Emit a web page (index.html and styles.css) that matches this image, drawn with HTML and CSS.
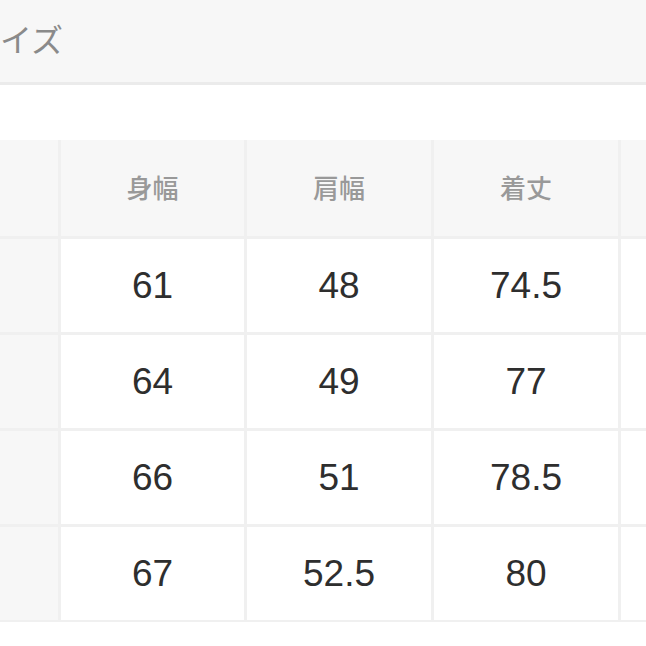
FILE: index.html
```html
<!DOCTYPE html>
<html lang="ja">
<head>
<meta charset="utf-8">
<link rel="stylesheet" href="styles.css">
</head>
<body>
<div class="page">
  <div class="titlebar"><span class="title">イズ</span></div>
  <div class="spacer"></div>
  <div class="table">
    <div class="cell rowhead"></div>
    <div class="cell head">身幅</div>
    <div class="cell head">肩幅</div>
    <div class="cell head">着丈</div>
    <div class="cell head"></div>

    <div class="cell rowhead"></div>
    <div class="cell data">61</div>
    <div class="cell data">48</div>
    <div class="cell data">74.5</div>
    <div class="cell data"></div>

    <div class="cell rowhead"></div>
    <div class="cell data">64</div>
    <div class="cell data">49</div>
    <div class="cell data">77</div>
    <div class="cell data"></div>

    <div class="cell rowhead"></div>
    <div class="cell data">66</div>
    <div class="cell data">51</div>
    <div class="cell data">78.5</div>
    <div class="cell data"></div>

    <div class="cell rowhead"></div>
    <div class="cell data">67</div>
    <div class="cell data">52.5</div>
    <div class="cell data">80</div>
    <div class="cell data"></div>
  </div>
</div>
</body>
</html>
```

FILE: styles.css
```css
html, body {
  margin: 0;
  padding: 0;
  background: #ffffff;
  overflow: hidden;
}
.page {
  width: 646px;
  height: 646px;
  overflow: hidden;
  font-family: "Noto Sans CJK JP", "Liberation Sans", sans-serif;
}
.titlebar {
  height: 82px;
  background: #f7f7f7;
  border-bottom: 3px solid #ebebeb;
  box-sizing: content-box;
  display: flex;
  align-items: center;
  overflow: hidden;
}
.title {
  font-size: 32px;
  color: #8a8a8a;
  margin-left: 0;
  line-height: 1;
  margin-top: -6px;
  white-space: nowrap;
}
.spacer {
  height: 55px;
}
.table {
  display: grid;
  grid-template-columns: 58px 183px 184px 184px 200px;
  grid-template-rows: 96px 93px 93px 93px 93px;
  gap: 3px;
  background: #f0f0f0;
  padding-bottom: 2px;
  width: 824px;
}
.cell {
  display: flex;
  align-items: center;
  justify-content: center;
}
.rowhead {
  background: #f7f7f7;
}
.head {
  background: #f7f7f7;
  font-family: "Noto Sans CJK JP", sans-serif;
  font-size: 26px;
  font-weight: 500;
  color: #999999;
  padding-bottom: 4px;
}
.data {
  background: #ffffff;
  font-family: "Liberation Sans", Arial, sans-serif;
  font-size: 37px;
  color: #2e2e2e;
}
```
